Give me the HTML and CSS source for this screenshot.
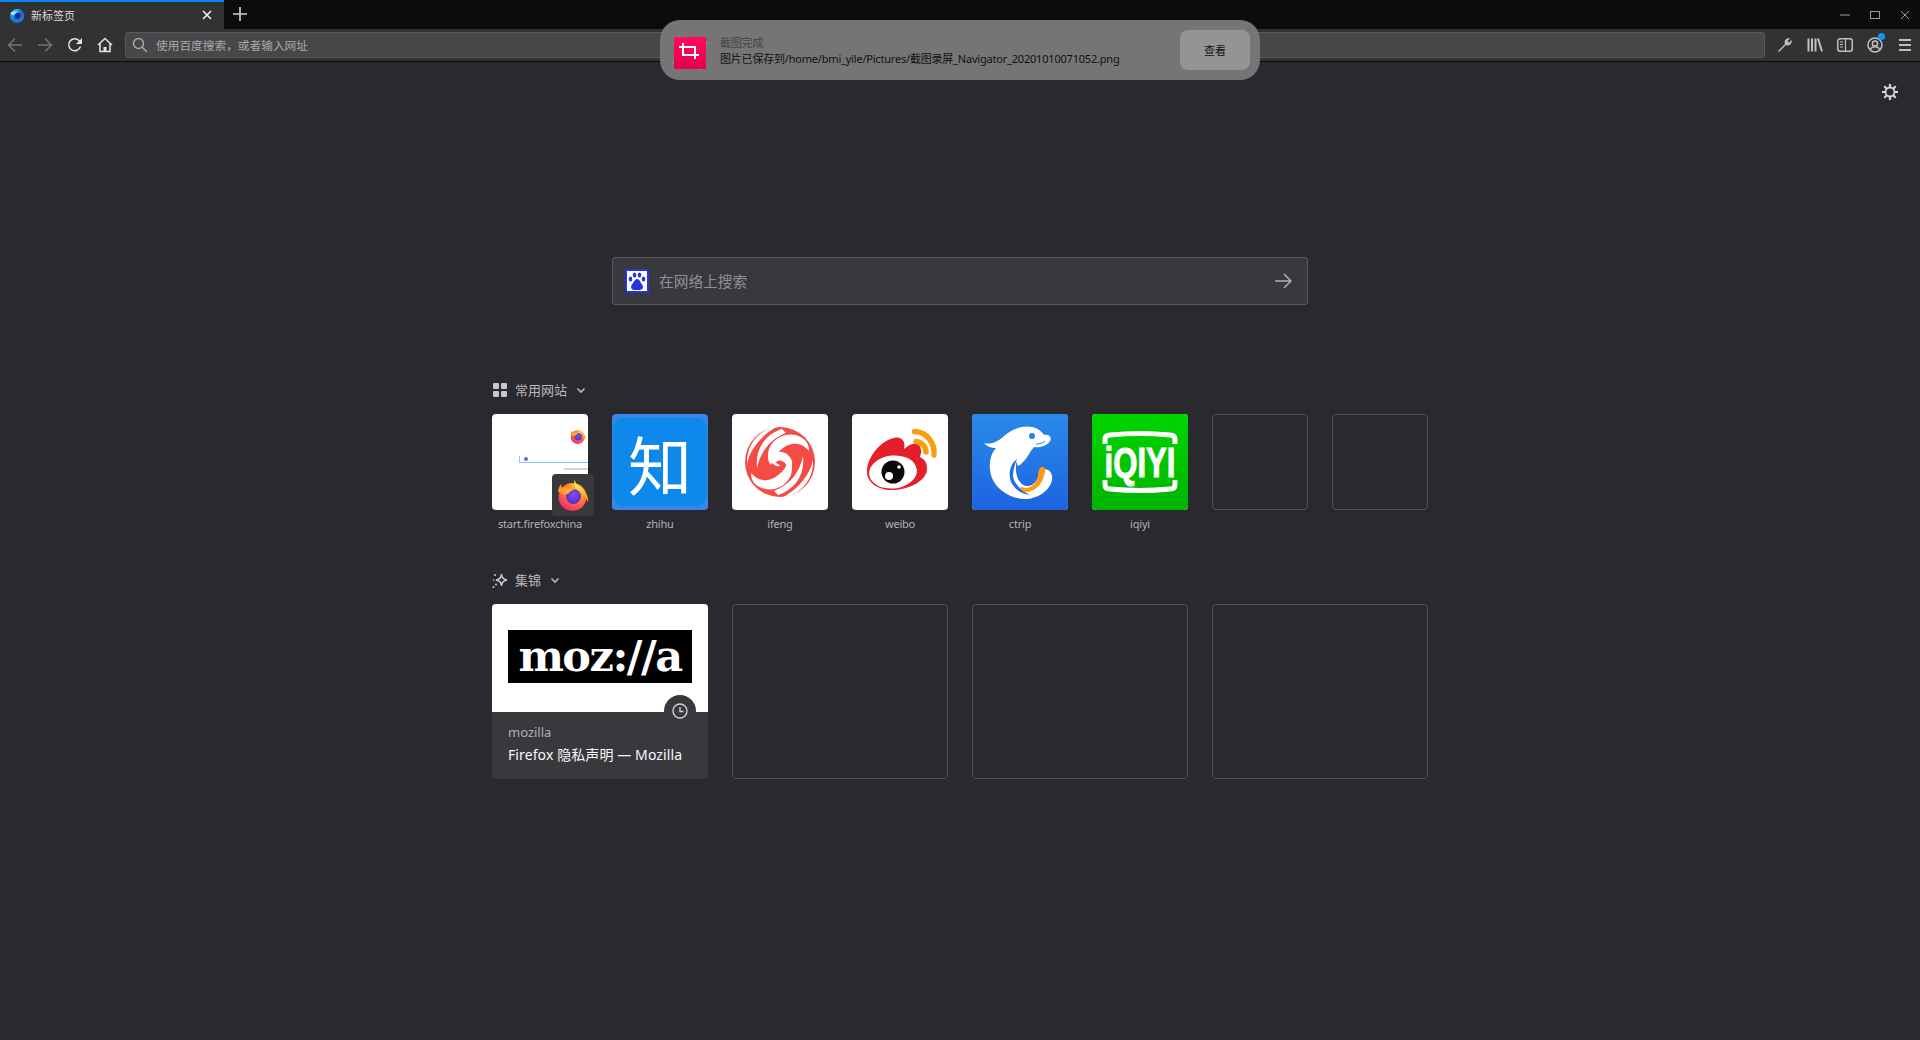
FILE: index.html
```html
<!DOCTYPE html>
<html lang="zh-CN">
<head>
    <meta charset="UTF-8">
    <title>新标签页</title>
    <link rel="stylesheet" href="styles.css">
</head>
<body>
<svg class="defs" width="0" height="0">
    <defs>
        <radialGradient id="foxBody" cx="0.7" cy="0.2" r="1">
            <stop offset="0" stop-color="#ffd13c"/>
            <stop offset="0.45" stop-color="#ff7a2f"/>
            <stop offset="0.8" stop-color="#f5366b"/>
            <stop offset="1" stop-color="#e31587"/>
        </radialGradient>
        <radialGradient id="foxCore" cx="0.5" cy="0.4" r="0.6">
            <stop offset="0" stop-color="#7e4fe8"/>
            <stop offset="1" stop-color="#5a2bc9"/>
        </radialGradient>
        <linearGradient id="foxFlame" x1="0.3" y1="0" x2="0.6" y2="1">
            <stop offset="0" stop-color="#fff36e"/>
            <stop offset="1" stop-color="#ff980e"/>
        </linearGradient>
        <linearGradient id="ctripBg" x1="0" y1="0" x2="0" y2="1">
            <stop offset="0" stop-color="#2a8ae9"/>
            <stop offset="1" stop-color="#1d64e0"/>
        </linearGradient>
        <linearGradient id="iqiyiBg" x1="0" y1="0" x2="0" y2="1">
            <stop offset="0" stop-color="#00d500"/>
            <stop offset="1" stop-color="#00b400"/>
        </linearGradient>
        <linearGradient id="shotBg" x1="0" y1="0" x2="0" y2="1">
            <stop offset="0" stop-color="#ff0a5c"/>
            <stop offset="1" stop-color="#e6004c"/>
        </linearGradient>
        <linearGradient id="tabLogo" x1="0" y1="0" x2="0" y2="1">
            <stop offset="0" stop-color="#2fc0f5"/>
            <stop offset="1" stop-color="#0a6fd8"/>
        </linearGradient>
        <symbol id="firefox" viewBox="0 0 32 32">
            <circle cx="15.500" cy="18" r="14" fill="url(#foxBody)"/>
            <path d="M18 0c-.5 4 3 6.500 6.500 9.500 5 4 7.500 9 6.500 14-2-5-5-9-9-11-3-3-6-7-4-12.500z" fill="url(#foxFlame)"/>
            <path d="M1 12c.5-3 1.500-5 3-7 0 2 1 3.500 2 4.500 3-2 7-2 10 0 2 1.500 1 3.500-1 3.500-2 .5-4 3-6 3C6 16 3 15 1 12z" fill="#ff9a2a"/>
            <circle cx="16.500" cy="17.500" r="7.500" fill="url(#foxCore)"/>
            <path d="M6 11c4-2 8-2 12 0-3 0-5 1-6 3-1 1-2 1-3 1 0-2-1-3-3-4z" fill="#ffb02e"/>
        </symbol>
    </defs>
</svg>

<div class="tabbar">
    <div class="tab">
        <svg class="tab-logo" width="16" height="16" viewBox="0 0 16 16">
            <circle cx="8" cy="9" r="7" fill="url(#tabLogo)"/>
            <path d="M10 0c0 2 3 3 4 6 1 3 .5 5-.5 7-1-4-3-6-5-6 2-2 2-5 1.500-7z" fill="#1a6fd0"/>
            <circle cx="8.500" cy="9" r="3.200" fill="#2b2a8c"/>
            <path d="M1.500 6c2-2 5-2 7-.5-2 .5-3 1.500-3.500 3C3.500 8 2 7.500 1.500 6z" fill="#a8e4ff"/>
        </svg>
        <span class="tab-title">新标签页</span>
        <svg class="tab-close" width="10" height="10" viewBox="0 0 10 10"><path d="M1 1l8 8M9 1l-8 8"/></svg>
    </div>
    <div class="newtab">
        <svg width="14" height="14" viewBox="0 0 14 14"><path d="M7 0v14M0 7h14"/></svg>
    </div>
    <div class="winctl">
        <svg width="30" height="30" viewBox="0 0 30 30"><path d="M10 15h10"/></svg>
        <svg width="30" height="30" viewBox="0 0 30 30"><rect x="10.500" y="11.500" width="9" height="7"/></svg>
        <svg width="30" height="30" viewBox="0 0 30 30"><path d="M11 11l8 8M19 11l-8 8"/></svg>
    </div>
</div>

<div class="toolbar">
    <div class="tb-btn off"><svg width="16" height="16" viewBox="0 0 16 16"><path d="M15 8H1.500M8 1.500L1.500 8 8 14.500"/></svg></div>
    <div class="tb-btn off"><svg width="16" height="16" viewBox="0 0 16 16"><path d="M1 8h13.500M8 1.500L14.500 8 8 14.500"/></svg></div>
    <div class="tb-btn bright"><svg width="16" height="16" viewBox="0 0 16 16"><path d="M13.500 9.500A6 6 0 1 1 12 3.500L14 5.500"/><path class="fill" d="M15 1v6H9z"/></svg></div>
    <div class="tb-btn bright"><svg width="16" height="16" viewBox="0 0 16 16"><path d="M1 8l7-6.500L15 8M3 6.500V14.500h10V6.500"/><rect class="fill" x="6.500" y="10" width="3" height="4.500"/></svg></div>
    <div class="urlbar">
        <svg width="16" height="16" viewBox="0 0 16 16"><circle cx="6.500" cy="6.500" r="5"/><path d="M10 10l5 5"/></svg>
        <span>使用百度搜索，或者输入网址</span>
    </div>
    <div class="tb-btn"><svg width="16" height="16" viewBox="0 0 16 16"><path d="M1.500 14.500l7.500-7.500"/><path class="fill" d="M7.500 5.500C7.500 3 10 .5 13 1.500L10.500 4l1.500 1.500L14.500 3c1 3-1.500 5.500-4 5.500-1 0-3-1-3-3z"/></svg></div>
    <div class="tb-btn"><svg width="16" height="16" viewBox="0 0 16 16"><path d="M1.500 1.500v13M5 1.500v13M8.500 1.500v13M11 1.500l4 13" stroke-width="2"/></svg></div>
    <div class="tb-btn"><svg width="16" height="16" viewBox="0 0 16 16"><rect x=".750" y="1.750" width="14.500" height="12.500" rx="2.500"/><path d="M8.500 2v12M3 5h3M3 7.500h3M3 10h3" stroke-width="1.200"/></svg></div>
    <div class="tb-btn account">
        <svg width="16" height="16" viewBox="0 0 16 16"><circle cx="8" cy="8" r="7"/><circle cx="8" cy="6.500" r="2.600"/><path d="M3.500 12.500c.8-2 2.500-2.800 4.500-2.800s3.700.8 4.500 2.800"/></svg>
        <i class="badge"></i>
    </div>
    <div class="tb-btn"><svg width="16" height="16" viewBox="0 0 16 16"><path d="M2 3h12M2 8h12M2 13h12" stroke-width="2"/></svg></div>
</div>

<div class="toast">
    <svg class="toast-icon" width="38" height="38" viewBox="0 0 38 38">
        <rect x="5" y="5" width="28" height="28" fill="#a9d5f5" transform="rotate(12 19 19)"/>
        <rect x="3" y="3" width="32" height="32" fill="url(#shotBg)"/>
        <path d="M12 9v12h16M8 13h16v12" fill="none" stroke="#fff" stroke-width="2"/>
    </svg>
    <div class="toast-text">
        <div class="toast-title">截图完成</div>
        <div class="toast-body">图片已保存到/home/bmi_yile/Pictures/截图录屏_Navigator_20201010071052.png</div>
    </div>
    <div class="toast-btn">查看</div>
</div>

<main class="page">
    <svg class="gear" width="18" height="18" viewBox="0 0 18 18">
        <circle cx="9" cy="9" r="4.500"/>
        <path d="M9 1v3M9 14v3M1 9h3M14 9h3M3.300 3.300l2.200 2.200M12.500 12.500l2.200 2.200M3.300 14.700l2.200-2.200M12.500 5.500l2.200-2.200" stroke-width="2.200"/>
    </svg>

    <div class="search">
        <svg class="baidu" width="24" height="24" viewBox="0 0 24 24">
            <rect x="1" y="1" width="22" height="22" fill="#fff" stroke="#2932e1" stroke-width="2"/>
            <g fill="#2932e1">
                <ellipse cx="5.500" cy="10" rx="1.800" ry="2.500"/>
                <ellipse cx="9.500" cy="6" rx="1.800" ry="2.500"/>
                <ellipse cx="14.500" cy="6" rx="1.800" ry="2.500"/>
                <ellipse cx="18.500" cy="10" rx="1.800" ry="2.500"/>
                <path d="M12 10c2 0 3 2 4 4 1 1.500 2 2.500 2 4 0 2-2 3-3 3h-6c-1 0-3-1-3-3 0-1.500 1-2.500 2-4s2-4 4-4z"/>
            </g>
        </svg>
        <span class="search-text">在网络上搜索</span>
        <svg class="search-go" width="18" height="18" viewBox="0 0 18 18"><path d="M1 9h16M10 2l7 7-7 7"/></svg>
    </div>

    <section class="topsites">
        <div class="sec-head">
            <svg class="sec-icon" width="16" height="16" viewBox="0 0 16 16">
                <rect x="1" y="1" width="6" height="6" rx="1"/><rect x="9" y="1" width="6" height="6" rx="1"/>
                <rect x="1" y="9" width="6" height="6" rx="1"/><rect x="9" y="9" width="6" height="6" rx="1"/>
            </svg>
            <span>常用网站</span>
            <svg class="chev" width="10" height="10" viewBox="0 0 10 10"><path d="M1.500 3.500L5 7l3.500-3.500"/></svg>
        </div>
        <div class="site-grid">
            <div class="site">
                <div class="tile thumb">
                    <svg class="thumb-fox" width="16" height="16"><use href="#firefox"/></svg>
                    <div class="thumb-bar"><i></i></div>
                    <div class="thumb-links"></div>
                </div>
                <div class="tile-badge"><svg width="32" height="32"><use href="#firefox"/></svg></div>
                <div class="site-name">start.firefoxchina</div>
            </div>
            <div class="site">
                <div class="tile zhihu"><div class="zhihu-inner">知</div></div>
                <div class="site-name">zhihu</div>
            </div>
            <div class="site">
                <div class="tile">
                    <svg width="96" height="96" viewBox="0 0 96 96">
                        <circle cx="48" cy="48" r="35" fill="#f44b45"/>
                        <g fill="#fff">
                            <path d="M46 12C28 15 14 30 15 50 18 36 28 22 46 12Z"/>
                            <path d="M50 15C34 20 23 34 25 54 28 40 36 26 54 19Z"/>
                            <path d="M73 26C60 15 42 22 37 35 35 42 36 48 39 51 41 42 50 32 60 30 66 29 72 31 77 37 77 33 76 29 73 26Z"/>
                            <path d="M50 84C68 81 82 66 81 46 78 60 68 74 50 84Z"/>
                            <path d="M46 81C62 76 73 62 71 42 68 56 60 70 42 77Z"/>
                            <path d="M23 70C36 81 54 74 59 61 61 54 60 48 57 45 55 54 46 64 36 66 30 67 24 65 19 59 19 63 20 67 23 70Z"/>
                        </g>
                        <path d="M36 44C40 42 42 39 46 38 52 37 58 41 60 47 61 52 58 57 54 59 56 54 55 49 50 47 47 46 45 47 43 49 45 49 47 50 48 52 44 53 40 50 36 44Z" fill="#fff"/>
                    </svg>
                </div>
                <div class="site-name">ifeng</div>
            </div>
            <div class="site">
                <div class="tile">
                    <svg width="96" height="96" viewBox="0 0 96 96">
                        <path d="M15 58C15 42 30 26 42 24 50 22 54 28 52 35 60 28 68 28 69 36 70 39 68 41 68 43 74 46 75 50 75 55 75 66 58 76 40 76 25 76 15 68 15 58Z" fill="#e41f2b"/>
                        <ellipse cx="41" cy="58" rx="24" ry="16.500" fill="#fff" transform="rotate(-6 41 58)"/>
                        <circle cx="41" cy="58" r="11.500" fill="#0a0a0a"/>
                        <circle cx="37" cy="62" r="4" fill="#fff"/>
                        <circle cx="47" cy="53" r="1.800" fill="#fff"/>
                        <path d="M62.500 17.500C75 18 83 29 82 41" fill="none" stroke="#f7a00e" stroke-width="5.500" stroke-linecap="round"/>
                        <path d="M64 27.500C70 28 74 33 74 38" fill="none" stroke="#f7a00e" stroke-width="5.500" stroke-linecap="round"/>
                    </svg>
                </div>
                <div class="site-name">weibo</div>
            </div>
            <div class="site">
                <div class="tile">
                    <svg width="96" height="96" viewBox="0 0 96 96">
                        <rect width="96" height="96" fill="url(#ctripBg)"/>
                        <path d="M12 29C20 31 26 27 31 23 40 15 51 11 60 13 66 14 70 18 72 21 78 20 80 24 78 27 75 32 68 34 62 33 58 37 56 44 49 50 47 52 45 52 45 50 44 48 44 46 44 45L44 52C43 62 48 71 54 72 60 73 66 67 67 60L72 55C78 55 81 60 80 66 78 77 65 85 53 85 38 85 20 74 18 56 17 46 20 38 24 34 20 34 15 33 12 29Z" fill="#fff"/>
                        <path d="M45 45C38 50 36 60 39 68 43 76 50 80 58 81 50 77 42 70 41 62 41 56 43 50 45 45Z" fill="#2070e3"/>
                        <path d="M48 72C55 77 64 72 66 62 66 57 68 52 71 53 74 54 74 58 72 61 71 70 62 79 52 78 50 77 49 75 48 72Z" fill="#ff9a14"/>
                        <circle cx="60" cy="22" r="3" fill="#2a80e6"/>
                        <path d="M64 30C68 30 71 29 73 27" fill="none" stroke="#2a80e6" stroke-width="1"/>
                    </svg>
                </div>
                <div class="site-name">ctrip</div>
            </div>
            <div class="site">
                <div class="tile">
                    <svg width="96" height="96" viewBox="0 0 96 96">
                        <rect width="96" height="96" fill="url(#iqiyiBg)"/>
                        <path d="M13 30V25C13 22 15 21 18 21 38 19 58 19 78 21 81 21 83 22 83 25V30M13 66V71C13 74 15 75 18 75 38 77 58 77 78 75 81 75 83 74 83 71V66" fill="none" stroke="#fff" stroke-width="5"/>
                        <text transform="translate(48 63) scale(.74 1)" text-anchor="middle" class="iqiyi-word">iQIYI</text>
                    </svg>
                </div>
                <div class="site-name">iqiyi</div>
            </div>
            <div class="site"><div class="tile empty"></div></div>
            <div class="site"><div class="tile empty"></div></div>
        </div>
    </section>

    <section class="highlights">
        <div class="sec-head">
            <svg class="sec-icon" width="16" height="16" viewBox="0 0 16 16">
                <path class="star" d="M9.500 2C10 6 11 7 15 8 11 9 10 10 9.500 14 9 10 8 9 4 8 8 7 9 6 9.500 2Z"/>
                <circle cx="3" cy="3" r="1"/><circle cx="4" cy="12.500" r="1"/><circle cx="1.500" cy="15" r="1"/><circle cx="1.500" cy="8" r=".800"/>
            </svg>
            <span>集锦</span>
            <svg class="chev" width="10" height="10" viewBox="0 0 10 10"><path d="M1.500 3.500L5 7l3.500-3.500"/></svg>
        </div>
        <div class="card-grid">
            <div class="card">
                <div class="card-img"><div class="moz-logo">moz://a</div></div>
                <div class="clock">
                    <svg width="16" height="16" viewBox="0 0 16 16"><circle cx="8" cy="8" r="7"/><path d="M8 4v4.500h3.500"/></svg>
                </div>
                <div class="card-body">
                    <div class="card-site">mozilla</div>
                    <div class="card-title">Firefox 隐私声明 — Mozilla</div>
                </div>
            </div>
            <div class="card empty"></div>
            <div class="card empty"></div>
            <div class="card empty"></div>
        </div>
    </section>
</main>
</body>
</html>
```
FILE: styles.css
```css
* {
    box-sizing: border-box;
}
html, body {
    height: 100%;
}
body {
    margin: 0;
    display: flex;
    flex-direction: column;
    position: relative;
    overflow: hidden;
    background: #2a2a2e;
    font-family: "Noto Sans", "Noto Sans CJK SC", sans-serif;
    color: #d7d7db;
}
.defs {
    position: absolute;
}

/* tab strip */
.tabbar {
    display: flex;
    height: 29px;
    background: #0c0c0d;
}
.tab {
    display: flex;
    align-items: center;
    width: 224px;
    padding: 0 12px 2px 9px;
    background: #323234;
    border-top: 2px solid #0a84ff;
    font-size: 11px;
    color: #d8d8da;
}
.tab-logo {
    margin-right: 6px;
}
.tab-title {
    flex: 1;
}
.tab-close path {
    fill: none;
    stroke: #f0f0f0;
    stroke-width: 1.6;
}
.newtab {
    display: flex;
    align-items: center;
    justify-content: center;
    width: 32px;
    padding-bottom: 2px;
}
.newtab path {
    fill: none;
    stroke: #d4d4d4;
    stroke-width: 1.6;
}
.winctl {
    display: flex;
    margin-left: auto;
}
.winctl path, .winctl rect {
    fill: none;
    stroke: #9a9a9a;
    stroke-width: 1;
}

/* nav toolbar */
.toolbar {
    display: flex;
    align-items: center;
    height: 33px;
    padding-bottom: 1px;
    background: #323234;
    border-bottom: 1px solid #0c0c0d;
}
.tb-btn {
    display: flex;
    flex: none;
    align-items: center;
    justify-content: center;
    position: relative;
    width: 30px;
    height: 32px;
}
.tb-btn svg {
    fill: none;
    stroke: #c0c0c2;
    stroke-width: 1.5;
}
.tb-btn .fill {
    fill: #c0c0c2;
    stroke: none;
}
.tb-btn.off svg {
    stroke: #727274;
}
.tb-btn.bright svg {
    stroke: #e2e2e4;
}
.tb-btn.bright .fill {
    fill: #e2e2e4;
}
.badge {
    position: absolute;
    top: 4px;
    right: 5px;
    width: 7px;
    height: 7px;
    border-radius: 50%;
    background: #0a9cf5;
}
.urlbar {
    display: flex;
    flex: 1;
    align-items: center;
    gap: 8px;
    height: 26px;
    margin: 0 5px;
    padding: 0 8px 0 6px;
    background: #474749;
    border: 1px solid #59595b;
    border-radius: 3px;
    font-size: 11.700px;
    color: #a8a8aa;
}
.urlbar svg {
    fill: none;
    stroke: #a8a8aa;
    stroke-width: 1.500;
}

/* screenshot notification */
.toast {
    position: absolute;
    top: 20px;
    left: 660px;
    display: flex;
    align-items: center;
    width: 600px;
    height: 60px;
    padding: 0 10px 0 11px;
    border-radius: 20px;
    background: #757577;
    color: #111;
}
.toast-icon {
    margin: 6px 11px 0 0;
}
.toast-text {
    flex: 1;
    margin-top: 2px;
    font-size: 11px;
    letter-spacing: -.2px;
}
.toast-title {
    color: #444;
    line-height: 16px;
}
.toast-body {
    line-height: 16px;
}
.toast-btn {
    display: flex;
    align-items: center;
    justify-content: center;
    width: 70px;
    height: 40px;
    border-radius: 8px;
    background: #949494;
    font-size: 11px;
}

/* new tab content */
.page {
    flex: 1;
    display: flex;
    flex-direction: column;
    align-items: center;
    padding-top: 195px;
}
.gear {
    position: absolute;
    top: 83px;
    right: 21px;
    fill: none;
    stroke: #d8d8da;
    stroke-width: 1.800;
}
.search {
    display: flex;
    align-items: center;
    width: 696px;
    height: 48px;
    padding: 0 15px 0 12px;
    background: #38383d;
    border: 1px solid #59595c;
    border-radius: 3px;
}
.baidu {
    margin-right: 10px;
}
.search-text {
    flex: 1;
    margin-top: -2px;
    font-size: 14.700px;
    color: #909093;
}
.search-go {
    fill: none;
    stroke: #b1b1b3;
    stroke-width: 1.500;
}
.topsites {
    width: 936px;
    margin-top: 77px;
}
.highlights {
    width: 936px;
    margin-top: 39px;
}
.sec-head {
    display: flex;
    align-items: center;
    height: 16px;
    margin-bottom: 16px;
    font-size: 13px;
    color: #b9b9bb;
}
.sec-head span {
    margin-top: -2px;
}
.sec-icon {
    margin-right: 7px;
    fill: #c8c8ca;
}
.sec-icon .star {
    fill: none;
    stroke: #c8c8ca;
    stroke-width: 1.500;
}
.chev {
    margin-left: 9px;
    fill: none;
    stroke: #b9b9bb;
    stroke-width: 1.600;
}
.site-grid {
    display: grid;
    grid-template-columns: repeat(8, 96px);
    gap: 24px;
}
.site {
    position: relative;
    width: 96px;
}
.tile {
    width: 96px;
    height: 96px;
    overflow: hidden;
    border-radius: 4px;
    background: #fff;
}
.tile svg {
    display: block;
}
.tile.empty {
    background: none;
    border: 1px solid #505053;
}
.thumb {
    position: relative;
}
.thumb-fox {
    position: absolute;
    top: 14px;
    right: 2px;
}
.thumb-bar {
    position: absolute;
    top: 42px;
    left: 27px;
    right: 0;
    height: 7px;
    border-left: 1px solid #8fc8f0;
    border-bottom: 1px solid #8fc8f0;
}
.thumb-bar i {
    display: block;
    width: 4px;
    height: 4px;
    margin: 1px 0 0 4px;
    border-radius: 50%;
    background: #6a62d8;
}
.thumb-links {
    position: absolute;
    top: 54px;
    right: 0;
    width: 24px;
    height: 2px;
    background: #d5d5d5;
}
.tile-badge {
    position: absolute;
    top: 60px;
    left: 60px;
    display: flex;
    align-items: center;
    justify-content: center;
    width: 42px;
    height: 42px;
    border-radius: 4px;
    background: #38383d;
}
.site-name {
    margin-top: 5px;
    font-size: 11px;
    letter-spacing: -.2px;
    line-height: 18px;
    text-align: center;
    color: #b1b1b3;
    white-space: nowrap;
}
.zhihu {
    background: #3787e8;
}
.zhihu-inner {
    display: flex;
    align-items: center;
    justify-content: center;
    height: 88px;
    margin: 4px 1px;
    border-radius: 10px;
    background: #0f88eb;
    font-family: "Noto Sans CJK SC", sans-serif;
    font-size: 64px;
    line-height: 80px;
    color: #fff;
}
.iqiyi-word {
    font-family: "Liberation Sans", sans-serif;
    font-size: 42px;
    font-weight: 700;
    fill: #fff;
    stroke: #fff;
    stroke-width: 1;
}
.card-grid {
    display: grid;
    grid-template-columns: repeat(4, 216px);
    gap: 24px;
}
.card {
    position: relative;
    height: 175px;
    overflow: hidden;
    border-radius: 4px;
    background: #38383d;
}
.card.empty {
    background: none;
    border: 1px solid #505053;
}
.card-img {
    display: flex;
    align-items: center;
    justify-content: center;
    height: 108px;
    padding-bottom: 4px;
    background: #fff;
}
.moz-logo {
    display: flex;
    align-items: center;
    justify-content: center;
    width: 184px;
    height: 53px;
    background: #000;
    font-family: "DejaVu Serif", serif;
    font-size: 43px;
    font-weight: 700;
    letter-spacing: -1.500px;
    line-height: 50px;
    color: #fff;
}
.clock {
    position: absolute;
    top: 91px;
    right: 12px;
    display: flex;
    align-items: center;
    justify-content: center;
    width: 32px;
    height: 32px;
    border-radius: 50%;
    background: #38383d;
}
.clock svg {
    fill: none;
    stroke: #d0d0d2;
    stroke-width: 1.400;
}
.card-body {
    padding: 11px 16px 0;
}
.card-site {
    font-size: 13px;
    line-height: 18px;
    color: #b1b1b3;
}
.card-title {
    margin-top: 4px;
    font-size: 14px;
    line-height: 20px;
    letter-spacing: .1px;
    color: #f9f9fa;
    white-space: nowrap;
}
```
